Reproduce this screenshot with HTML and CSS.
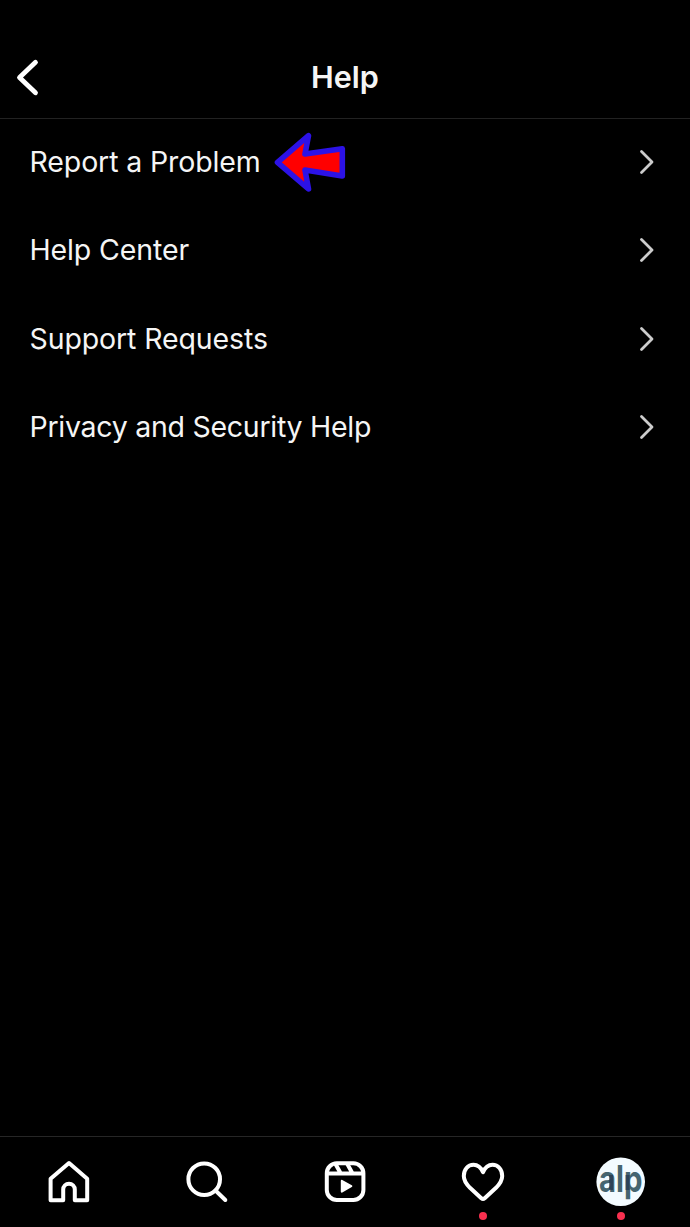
FILE: index.html
```html
<!DOCTYPE html>
<html lang="en">
<head>
    <meta charset="UTF-8">
    <meta name="viewport" content="width=device-width, initial-scale=1.0">
    <title>Help</title>
    <link rel="stylesheet" href="styles.css">
</head>
<body>
    <header class="header">
        <a href="#" class="back" aria-label="Back">
            <svg width="24" height="38" viewBox="0 0 24 38"><path d="M20.5 4.3 L4.5 19.5 L20.5 34.8"/></svg>
        </a>
        <h1>Help</h1>
    </header>

    <main class="menu">
        <a href="#" class="menu-item">
            <span class="label">Report a Problem</span>
            <svg class="arrow" width="74" height="62" viewBox="0 0 74 62"><path d="M4.5 31.3 L35.5 4.7 L32 23 L69.3 17.8 V45 L32 39 L35.5 58 Z"/></svg>
            <svg class="chevron" width="16" height="26" viewBox="0 0 16 26"><path d="M2.5 2.5 L13 13 L2.5 23.5"/></svg>
        </a>
        <a href="#" class="menu-item">
            <span class="label">Help Center</span>
            <svg class="chevron" width="16" height="26" viewBox="0 0 16 26"><path d="M2.5 2.5 L13 13 L2.5 23.5"/></svg>
        </a>
        <a href="#" class="menu-item">
            <span class="label">Support Requests</span>
            <svg class="chevron" width="16" height="26" viewBox="0 0 16 26"><path d="M2.5 2.5 L13 13 L2.5 23.5"/></svg>
        </a>
        <a href="#" class="menu-item">
            <span class="label tight">Privacy and Security Help</span>
            <svg class="chevron" width="16" height="26" viewBox="0 0 16 26"><path d="M2.5 2.5 L13 13 L2.5 23.5"/></svg>
        </a>
    </main>

    <nav class="tab-bar">
        <a href="#" class="tab" aria-label="Home">
            <svg width="48" height="48" viewBox="0 0 48 48"><path d="M5.6 19.8 L24 4 L42.2 19.8 V41.2 H29.8 V30.5 A5.8 5.8 0 0 0 18.2 30.5 V41.2 H5.6 Z"/></svg>
        </a>
        <a href="#" class="tab" aria-label="Search">
            <svg width="48" height="48" viewBox="0 0 48 48"><circle cx="21.2" cy="20.2" r="15.8"/><path d="M32.5 31.5 L42.3 41"/></svg>
        </a>
        <a href="#" class="tab" aria-label="Reels">
            <svg width="48" height="48" viewBox="0 0 48 48">
                <rect x="5.8" y="4.3" width="36.6" height="36.6" rx="10"/>
                <path d="M6 14.5 H42 M14.5 5 L19.5 14 M26.3 5 L31.3 14"/>
                <path class="play" d="M20.8 21.8 L30.3 27.2 L20.8 32.6 Z"/>
            </svg>
        </a>
        <a href="#" class="tab" aria-label="Activity">
            <svg width="48" height="48" viewBox="0 0 48 48"><path d="M24 13.2 C21.8 8.2 18.4 5.8 14.5 5.8 C8.8 5.8 4.8 10.5 4.8 17 C4.8 22 7.4 25.2 11 28.8 L22.3 39.2 Q24 40.6 25.7 39.2 L37 28.8 C40.6 25.2 43.2 22 43.2 17 C43.2 10.5 39.2 5.8 33.5 5.8 C29.6 5.8 26.2 8.2 24 13.2 Z"/></svg>
            <span class="dot"></span>
        </a>
        <a href="#" class="tab" aria-label="Profile">
            <svg class="avatar" width="50" height="50" viewBox="0 0 50 50">
                <circle cx="24.7" cy="24.7" r="24.3"/>
                <text x="3" y="35.3" textLength="43.5" lengthAdjust="spacingAndGlyphs">alp</text>
                <path class="shade" d="M13 18 h4 v15 h-4 Z M29.5 18 h4 v15 h-4 Z"/>
            </svg>
            <span class="dot"></span>
        </a>
    </nav>
</body>
</html>
```

FILE: styles.css
```css
* {
    box-sizing: border-box;
}

body {
    margin: 0;
    height: 1227px;
    display: flex;
    flex-direction: column;
    font-family: 'Inter', sans-serif;
    background-color: #000;
    color: #f5f5f5;
}

a {
    color: inherit;
    text-decoration: none;
}

svg {
    display: block;
    flex: none;
    overflow: visible;
    fill: none;
    stroke: #fff;
    stroke-linecap: round;
    stroke-linejoin: round;
}

/* Header Section */
.header {
    display: grid;
    grid-template-columns: 60px 1fr 60px;
    align-items: center;
    height: 119px;
    padding-top: 36px;
    border-bottom: 1px solid #222;
}

.back {
    padding-left: 15px;
}

.back svg {
    stroke-width: 4.8;
}

h1 {
    margin: 0;
    text-align: center;
    font-size: 30.5px;
    font-weight: 600;
    line-height: 40px;
}

/* Menu */
.menu {
    flex: 1;
}

.menu-item {
    display: flex;
    align-items: center;
    height: 88.3px;
    padding: 0 35px 2px 29.5px;
}

.label {
    font-size: 28.5px;
    line-height: 40px;
    letter-spacing: -0.12px;
    white-space: nowrap;
}

.label.tight {
    letter-spacing: -0.27px;
}

.arrow {
    margin-left: 12px;
    fill: #f00;
    stroke: #2c12e6;
    stroke-width: 5.6;
}

.chevron {
    margin-left: auto;
    stroke: #ccc;
    stroke-width: 2.8;
}

/* Bottom tabs */
.tab-bar {
    display: grid;
    grid-template-columns: repeat(5, 1fr);
    height: 91px;
    border-top: 1px solid #262626;
}

.tab {
    display: flex;
    flex-direction: column;
    align-items: center;
    padding-top: 22px;
}

.tab svg {
    stroke-width: 4;
}

.tab .play {
    fill: #fff;
    stroke-width: 2;
}

.tab .avatar {
    margin-top: -2px;
    fill: #f3fbff;
    stroke: none;
}

.avatar text {
    font-family: 'Inter', sans-serif;
    font-size: 37px;
    font-weight: 700;
    fill: #456570;
}

.avatar .shade {
    fill: #1d2d4a;
    opacity: 0.6;
}

.dot {
    width: 8px;
    height: 8px;
    margin-top: 5px;
    border-radius: 50%;
    background-color: #f8304f;
}
```
